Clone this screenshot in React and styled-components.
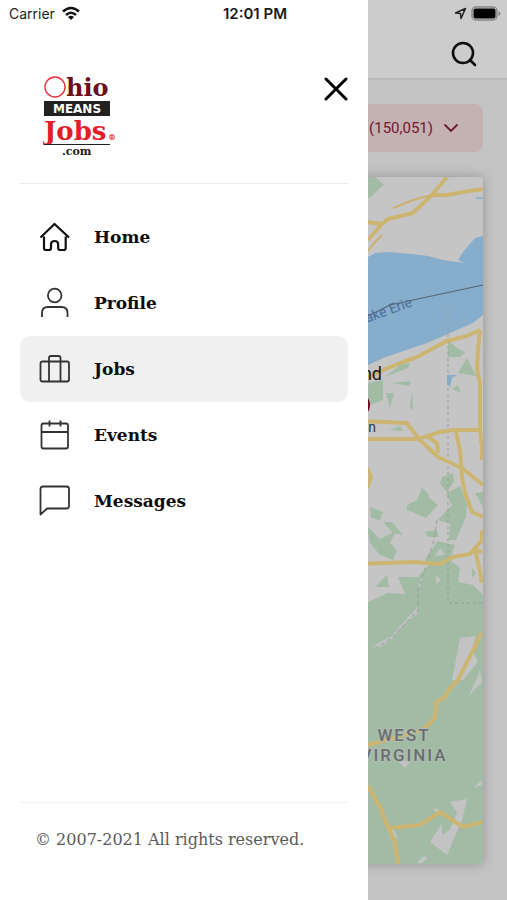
import React, {useState} from 'react';
import styled, {createGlobalStyle} from 'styled-components'

const navItems = [
    {id: 'home', label: 'Home', stroke: 2.2, color: '#111', path: 'M2.500 16.500L16.500 3l14.500 13.500M6 15.500v11.500q0 2 2 2h3q2 0 2-2v-3.500q0-3.500 3.600-3.500t3.600 3.500v3.500q0 2 2 2h3.500q2 0 2-2V15.500'},
    {id: 'profile', label: 'Profile', path: 'M23.500 8.500a6.800 6.800 0 1 1-13.600 0a6.800 6.800 0 1 1 13.600 0M4 30v-4q0-6 6-6h13.500q6 0 6 6v4'},
    {id: 'jobs', label: 'Jobs', path: 'M4.500 8.500h24.500q2 0 2 2v16q0 2-2 2H4.500q-2 0-2-2v-16q0-2 2-2M11 28.500V5q0-2 2-2h7.500q2 0 2 2v23.500'},
    {id: 'events', label: 'Events', path: 'M5.500 4.500h22.500q2 0 2 2v21q0 2-2 2H5.500q-2 0-2-2v-21q0-2 2-2M3.500 13h26.500M11.500 1.500v6M22.500 1.500v6'},
    {id: 'messages', label: 'Messages', path: 'M2.500 29.500V4q0-2.500 2.500-2.500h23.500q2.500 0 2.500 2.500v17q0 2.500-2.500 2.500H9z'}
]

const roads = [
    'M447 177L432 195L413 213L388 219L382 224L368 240',
    'M367 222L382 224',
    'M483 189L463 192L447 195L432 195',
    'M480 330L467 336L447 341L430 350L417 357L403 362L383 370L368 378',
    'M480 330L478 350L477 370L480 383V430L482 447V460',
    'M360 421L407 423L418 438L438 457L462 468L483 485',
    'M360 439H418L440 432L453 430L480 430',
    'M428 437L437 443L438 453',
    'M456 432L460 450L462 477L465 493L472 512L483 517',
    'M367 468L371 477L367 488',
    'M360 564L413 562L440 564L453 557L470 554L482 540V530',
    'M482 552L475 550L479 567L482 583',
    'M481 633L475 647L467 662L458 680L450 688L445 697L436 702L435 718L422 730L368 745',
    'M368 786L380 807L387 825L395 842L398 864',
    'M390 828L420 825L440 812L463 827L483 822'
]

const parks = [
    'M360 606L368 602L388 593L405 594L398 577L418 577L428 566L425 559L433 548L437 541L455 545L450 560L460 568L458 582L473 585L483 595V864H360z',
    'M367 177L375 177L384 185L378 190L371 197L367 198z',
    'M448 340L457 348L465 352L460 357L448 357z',
    'M467 358L476 376L458 373z',
    'M458 385L461 393L452 389z',
    'M400 365L410 363L408 368L385 377z',
    'M392 383L410 381V386z',
    'M360 385L383 380V400L368 406z',
    'M386 393H394L390 408z',
    'M412 390L413 410L410 408z',
    'M390 430L400 426L403 431z',
    'M422 488L428 493L429 498L438 505L426 518L407 510V505L417 500z',
    'M442 477L453 473L454 482L447 492L440 484z',
    'M446 494L460 486L467 503L466 517L456 540H449L450 524L438 520L452 505z',
    'M475 493L483 492V507z',
    'M370 507L383 512L380 520L371 518z',
    'M383 522H392L403 535L393 533z',
    'M425 532L437 530L439 537L428 537z',
    'M367 526L380 539L396 531L390 543L397 550L393 560L380 555L370 543z',
    'M387 575L389 587H375z',
    'M472 568L476 573L472 578z'
]

const clearings = [
    'M460 638L476 636L472 650L478 662L463 680L452 680z',
    'M480 670L482 682L468 697L474 685z',
    'M450 802L467 799L462 820L447 855L430 842L442 823V835L450 830L457 813z',
    'M473 788L482 780V785z',
    'M433 808L440 810L437 814z',
    'M388 825L395 832L398 839L391 836z',
    'M417 862L424 856L428 858L420 864z',
    'M373 648L377 644L392 636L408 617L418 607L417 614L403 625L392 639L380 647z',
    'M418 585L424 573L420 588z',
    'M436 575L441 580L436 584z',
    'M398 761H411L405 768z',
    'M440 548L445 555L435 556z'
]

const lake = 'M360 260L368 257L375 253L388 252L412 254L428 256L443 260L465 263L458 260L463 252L475 238L483 236V315L473 323L450 333L427 343L383 358L360 369z'

function Logo() {
    return (
        <LogoArt viewBox="0 0 76 84" role="img" aria-label="Ohio Means Jobs .com">
            <circle cx="12" cy="13" r="10" fill="none" stroke="#e0303a" strokeWidth="1.4" />
            <SlabText x="23" y="22" size={24} color="#6d0f1b">hio</SlabText>
            <rect x="1" y="27" width="66" height="15" fill="#222021" />
            <MeansText x="34" y="39" textAnchor="middle">MEANS</MeansText>
            <SlabText x="1" y="66" size={26} color="#e01f2b">Jobs</SlabText>
            <SlabText x="65" y="66" size={8} color="#e01f2b">®</SlabText>
            <rect x="1" y="70" width="66" height="1" fill="#222021" />
            <SlabText x="19" y="81" size={11} color="#222021">.com</SlabText>
        </LogoArt>
    )
}

function StatusBar() {
    return (
        <Status>
            <Carrier>
                Carrier
                <svg width="20" height="15" viewBox="0 0 20 15" fill="none" stroke="#111" strokeWidth="2.600">
                    <path d="M2 5.500q8-7 16 0M5 9q5-4.500 10 0" />
                    <path d="M7 11q3-2.500 6 0l-3 3z" fill="#111" stroke="none" />
                </svg>
            </Carrier>
            <Clock>12:01 PM</Clock>
            <Indicators>
                <svg width="13" height="13" viewBox="0 0 13 13" fill="none" stroke="#222" strokeWidth="1.500" strokeLinejoin="round">
                    <path d="M1.500 6L11.500 1.500L7 11.500L6.500 6.500z" />
                </svg>
                <svg width="30" height="15" viewBox="0 0 30 15">
                    <rect x="1" y="1" width="25" height="13" rx="4" fill="none" stroke="#858585" strokeWidth="1.500" />
                    <rect x="2.500" y="2.500" width="22" height="10" rx="2" fill="#000" />
                    <path d="M27.500 5q2 1 2 2.500t-2 2.500z" fill="#858585" />
                </svg>
            </Indicators>
        </Status>
    )
}

function JobsMap() {
    return (
        <MapArt viewBox="24 177 459 687" preserveAspectRatio="xMaxYMin slice" role="img" aria-label="Map">
            <rect x="24" y="177" width="459" height="687" fill="#f7f7f8" />
            {parks.map(d => <path key={d} d={d} fill="#cbeacf" />)}
            {clearings.map(d => <path key={d} d={d} fill="#f4f4f6" />)}
            <path d={lake} fill="#a8d9ff" />
            <path d="M447 375h10l-5 3l-2 9l-3-3z" fill="#a8d9ff" />
            <path d="M476 198h7" stroke="#a8d9ff" strokeWidth="1.500" />
            <path d="M448 310V603H483" fill="none" stroke="#bcc5bf" strokeDasharray="3 3" />
            <path d="M437 520L434 540L424 572L418 590V610L392 638L372 650" fill="none" stroke="#c0c5c1" strokeDasharray="4 3" />
            <g fill="none" stroke="#ffe38c" strokeWidth="4" strokeLinejoin="round">
                {roads.map(d => <path key={d} d={d} />)}
            </g>
            <path d="M432 195L413 200L393 208M382 235L375 242L367 252" fill="none" stroke="#ffdc8c" strokeWidth="2" />
            <path d="M360 320L368 316L390 305L413 300L483 285" fill="none" stroke="#6f7f8e" strokeWidth="1.200" />
            <MapLabel x="413" y="306" textAnchor="end" size={14} color="#5f8bc4" transform="rotate(-20 413 306)">Lake Erie</MapLabel>
            <MapLabel x="382" y="380" textAnchor="end" size={18} color="#222">Cleveland</MapLabel>
            <circle cx="358" cy="405" r="12" fill="#8b0b25" />
            <MapLabel x="376" y="432" textAnchor="end" size={14} color="#444">Akron</MapLabel>
            <StateLabel x="404" y="741" textAnchor="middle">WEST</StateLabel>
            <StateLabel x="404" y="761" textAnchor="middle">VIRGINIA</StateLabel>
        </MapArt>
    )
}

export default function App() {
    const [active, setActive] = useState('jobs')

    return (
        <Screen>
            <GlobalStyle />
            <TopBar>
                <IconButton aria-label="Search">
                    <svg width="26" height="26" viewBox="0 0 26 26" fill="none" stroke="#111" strokeWidth="2.600" strokeLinecap="round">
                        <circle cx="12" cy="12" r="10" />
                        <path d="M19 19l5 5" />
                    </svg>
                </IconButton>
            </TopBar>
            <Content>
                <FilterButton>
                    (150,051)
                    <svg width="16" height="10" viewBox="0 0 16 10" fill="none" stroke="#8d1c39" strokeWidth="1.800" strokeLinecap="round">
                        <path d="M2 2l6 6l6-6" />
                    </svg>
                </FilterButton>
                <MapCard>
                    <JobsMap />
                </MapCard>
            </Content>
            <Backdrop />
            <Drawer>
                <DrawerHeader>
                    <Logo />
                    <IconButton aria-label="Close menu">
                        <svg width="26" height="26" viewBox="0 0 26 26" fill="none" stroke="#000" strokeWidth="3" strokeLinecap="round">
                            <path d="M4 3l20 20M24 3L4 23" />
                        </svg>
                    </IconButton>
                </DrawerHeader>
                <Nav>
                    {navItems.map(item => (
                        <NavLink key={item.id} href={'#' + item.id} $active={item.id === active} onClick={() => setActive(item.id)}>
                            <NavIcon viewBox="0 0 32 32" stroke={item.color || '#333'} strokeWidth={item.stroke || 1.8}>
                                <path d={item.path} />
                            </NavIcon>
                            {item.label}
                        </NavLink>
                    ))}
                </Nav>
                <Footer>© 2007-2021 All rights reserved.</Footer>
            </Drawer>
            <StatusBar />
        </Screen>
    )
}

const GlobalStyle = createGlobalStyle`
    * {
        box-sizing: border-box;
    }
    body {
        margin: 0;
        font-family: Inter, "Liberation Sans", sans-serif;
    }
`

const Screen = styled.div`
    position: relative;
    display: flex;
    flex-direction: column;
    min-height: 100vh;
    background: #f5f5f5;
    overflow: hidden;
`

const Status = styled.div`
    position: absolute;
    top: 0;
    left: 0;
    right: 0;
    display: grid;
    grid-template-columns: 1fr auto 1fr;
    align-items: center;
    height: 27px;
    padding: 0 6px 0 9px;
    color: #1a1a1a;
`

const Carrier = styled.div`
    display: flex;
    align-items: center;
    gap: 6px;
    font-size: 14px;
`

const Clock = styled.div`
    font-size: 15px;
    font-weight: 600;
`

const Indicators = styled.div`
    display: flex;
    align-items: center;
    justify-content: flex-end;
    gap: 4px;
`

const TopBar = styled.header`
    display: flex;
    justify-content: flex-end;
    align-items: center;
    height: 80px;
    padding: 30px 30px 0;
    background: #fff;
    border-bottom: 2px solid #e8e8e8;
`

const IconButton = styled.button`
    display: flex;
    padding: 0;
    border: 0;
    background: none;
    cursor: pointer;
`

const Content = styled.main`
    flex: 1;
    display: flex;
    flex-direction: column;
    gap: 25px;
    padding: 24px 24px 36px;
`

const FilterButton = styled.button`
    display: flex;
    align-items: center;
    justify-content: flex-end;
    gap: 10px;
    height: 48px;
    padding: 0 24px;
    border: 0;
    border-radius: 8px;
    background: #f6dfe0;
    color: #8d1c39;
    font-family: Roboto, sans-serif;
    font-size: 15px;
    font-weight: 400;
    cursor: pointer;
`

const MapCard = styled.section`
    flex: 1;
    display: flex;
    min-height: 400px;
    border-radius: 4px;
    box-shadow: 0 0 12px rgba(0, 0, 0, 0.25);
    overflow: hidden;
`

const MapArt = styled.svg`
    display: block;
    flex: 1;
    width: 100%;
    height: auto;
`

const MapLabel = styled.text`
    font-family: Roboto, sans-serif;
    font-size: ${props => props.size}px;
    fill: ${props => props.color};
`

const StateLabel = styled.text`
    font-family: Roboto, sans-serif;
    font-size: 17px;
    font-weight: 500;
    letter-spacing: 2px;
    fill: #858a8a;
    stroke: #dfeee1;
    stroke-width: 2px;
    paint-order: stroke;
`

const Backdrop = styled.div`
    position: absolute;
    inset: 0;
    background: rgba(0, 0, 0, 0.2);
`

const Drawer = styled.aside`
    position: absolute;
    top: 0;
    bottom: 0;
    left: 0;
    display: flex;
    flex-direction: column;
    width: 72.5%;
    padding: 0 20px;
    background: #fff;
`

const DrawerHeader = styled.div`
    display: flex;
    justify-content: space-between;
    align-items: flex-start;
    height: 184px;
    padding: 76px 0 0 23px;
    border-bottom: 1px solid #ebebeb;
`

const LogoArt = styled.svg`
    width: 76px;
    height: 84px;
    margin-top: -2px;
`

const SlabText = styled.text`
    font-family: "DejaVu Serif", serif;
    font-size: ${props => props.size}px;
    font-weight: 700;
    fill: ${props => props.color};
`

const MeansText = styled.text`
    font-family: "DejaVu Sans", sans-serif;
    font-size: 12px;
    font-weight: 700;
    fill: #fff;
`

const Nav = styled.nav`
    flex: 1;
    padding-top: 20px;
`

const NavLink = styled.a`
    display: flex;
    align-items: center;
    gap: 24px;
    height: 66px;
    padding: 0 18px;
    border-radius: 10px;
    background: ${props => props.$active ? '#f0f0f0' : 'transparent'};
    color: #0d0d0d;
    font-family: "DejaVu Serif", serif;
    font-size: 17px;
    font-weight: 700;
    text-decoration: none;
`

const NavIcon = styled.svg`
    width: 32px;
    height: 32px;
    fill: none;
    stroke-linejoin: round;
`

const Footer = styled.footer`
    height: 98px;
    padding: 27px 15px 0;
    border-top: 1px solid #f0f0f0;
    color: #5a5a5a;
    font-family: "DejaVu Serif", serif;
    font-size: 16px;
    line-height: 20px;
    white-space: nowrap;
`
